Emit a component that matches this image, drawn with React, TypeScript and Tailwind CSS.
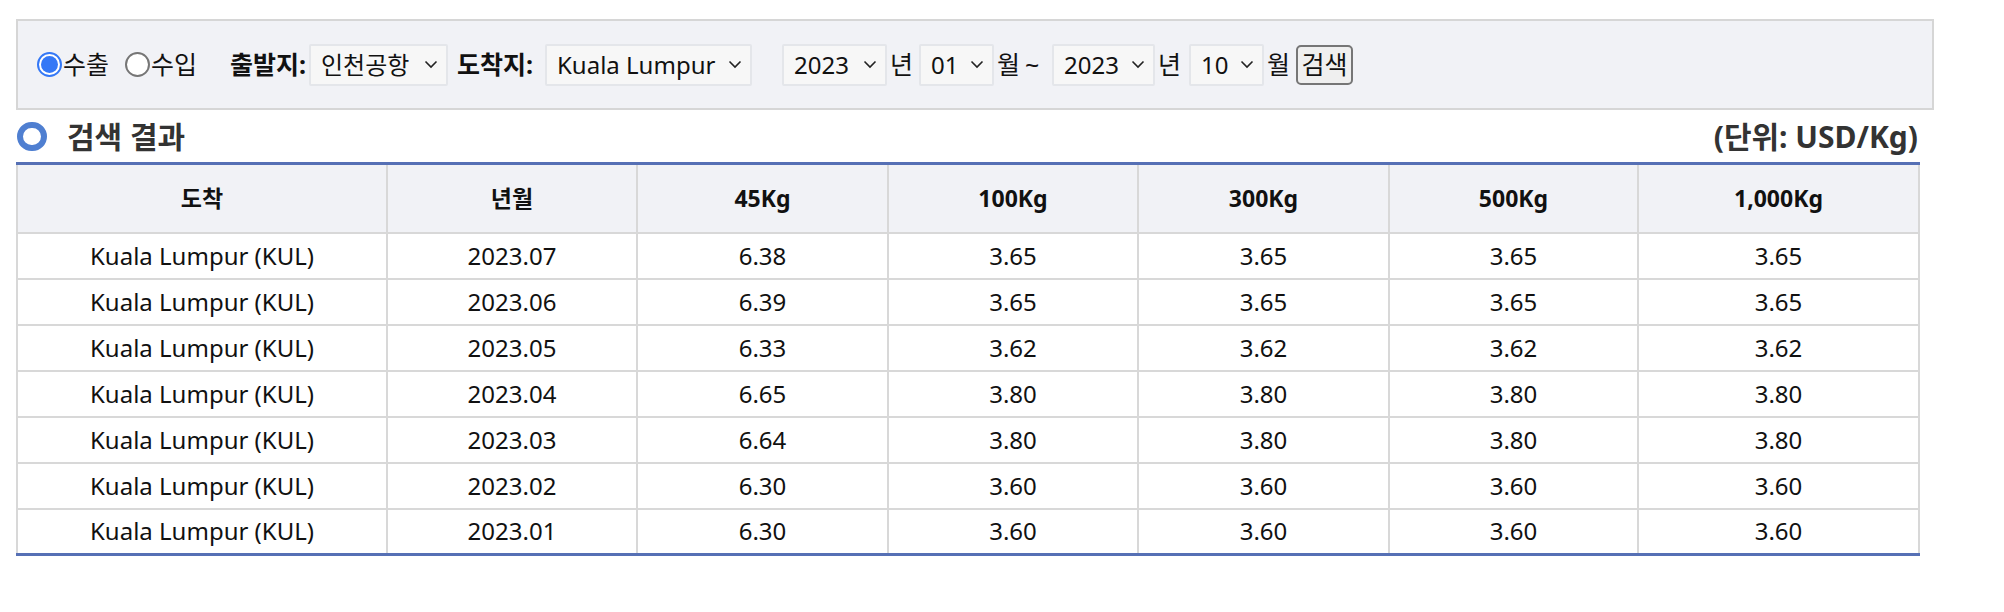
import React from "react";

const font = '"Noto Sans", "Noto Sans CJK KR", sans-serif';

function Chevron() {
  return (
    <svg width="14" height="9" viewBox="0 0 14 9" className="shrink-0">
      <path d="M1.5 1.5 L7 7 L12.5 1.5" fill="none" stroke="#222" strokeWidth="1.6" />
    </svg>
  );
}

function Sel({ label, w, cls }: { label: string; w: string; cls: string }) {
  return (
    <div
      className={`flex h-[42px] shrink-0 items-center justify-between rounded-[2px] border-2 border-[#e4e6ea] bg-[#f7f7f7] pl-[10px] pr-[8px] text-[24px] text-[#111] ${w} ${cls}`}
    >
      <span className="whitespace-nowrap">{label}</span>
      <Chevron />
    </div>
  );
}

function Radio({ checked, cls }: { checked: boolean; cls: string }) {
  return checked ? (
    <span className={`flex h-[25px] w-[25px] shrink-0 items-center justify-center rounded-full border-2 border-[#3478f6] bg-white ${cls}`}>
      <span className="block h-[17px] w-[17px] rounded-full bg-[#3478f6]" />
    </span>
  ) : (
    <span className={`block h-[25px] w-[25px] shrink-0 rounded-full border-2 border-[#767676] bg-white ${cls}`} />
  );
}

function Lbl({ t, cls }: { t: string; cls: string }) {
  return <span className={`block shrink-0 whitespace-nowrap ${cls}`}>{t}</span>;
}

const rows = [
  ["2023.07", "6.38", "3.65"],
  ["2023.06", "6.39", "3.65"],
  ["2023.05", "6.33", "3.62"],
  ["2023.04", "6.65", "3.80"],
  ["2023.03", "6.64", "3.80"],
  ["2023.02", "6.30", "3.60"],
  ["2023.01", "6.30", "3.60"],
];

const heads = ["도착", "년월", "45Kg", "100Kg", "300Kg", "500Kg", "1,000Kg"];
const widths = [370, 250, 251, 250, 251, 249, 281];

export default function App() {
  return (
    <div className="min-h-[612px] bg-white pt-[19px] pl-[16px]" style={{ fontFamily: font }}>
      <div className="flex h-[91px] w-[1918px] items-center border-2 border-[#d6d6d6] bg-[#f1f2f6] pl-[19px] text-[25px] text-[#111]">
        <Radio checked cls="" />
        <Lbl t="수출" cls="w-[49px] pl-[1px]" />
        <Radio checked={false} cls="ml-[14px]" />
        <Lbl t="수입" cls="w-[48px] pl-[1px]" />
        <Lbl t="출발지:" cls="ml-[32px] w-[75px] font-bold" />
        <Sel label="인천공항" w="w-[139px]" cls="ml-[4px]" />
        <Lbl t="도착지:" cls="ml-[9px] w-[78px] font-bold" />
        <Sel label="Kuala Lumpur" w="w-[207px]" cls="ml-[10px]" />
        <Sel label="2023" w="w-[105px]" cls="ml-[30px]" />
        <Lbl t="년" cls="ml-[3px] w-[22px]" />
        <Sel label="01" w="w-[75px]" cls="ml-[7px]" />
        <Lbl t="월" cls="ml-[3px] w-[22px]" />
        <Lbl t="~" cls="ml-[6px] w-[17px]" />
        <Sel label="2023" w="w-[103px]" cls="ml-[10px]" />
        <Lbl t="년" cls="ml-[3px] w-[22px]" />
        <Sel label="10" w="w-[75px]" cls="ml-[9px]" />
        <Lbl t="월" cls="ml-[3px] w-[21px]" />
        <span className="ml-[8px] flex h-[40px] w-[57px] shrink-0 items-center justify-center rounded-[5px] border-2 border-[#767676] bg-[#efefef] text-[25px] leading-none">
          검색
        </span>
      </div>

      <div className="flex h-[52px] w-[1902px] items-center justify-between">
        <div className="flex items-center">
          <span className="ml-[1px] block h-[29px] w-[30px] rounded-full border-[6px] border-[#4f7fd1] blur-[0.7px]" />
          <span className="ml-[20px] text-[30px] font-bold text-[#333]">검색 결과</span>
        </div>
        <span className="text-[30px] font-bold text-[#333]">(단위: USD/Kg)</span>
      </div>

      <table className="w-[1902px] table-fixed border-collapse border-t-[3px] border-b-[3px] border-t-[#5670b5] border-b-[#5670b5] text-[#111]">
        <colgroup>
          {widths.map((w, i) => (
            <col key={i} style={{ width: w }} />
          ))}
        </colgroup>
        <thead>
          <tr className="h-[69px] bg-[#f1f2f6]">
            {heads.map((h) => (
              <th key={h} className="border-2 border-t-0 border-[#d8d8d8] text-center text-[23px] font-bold">
                {h}
              </th>
            ))}
          </tr>
        </thead>
        <tbody>
          {rows.map((r) => (
            <tr key={r[0]} className="h-[46px]">
              <td className="border-2 border-[#d8d8d8] text-center text-[24px]">Kuala Lumpur (KUL)</td>
              <td className="border-2 border-[#d8d8d8] text-center text-[24px]">{r[0]}</td>
              <td className="border-2 border-[#d8d8d8] text-center text-[24px]">{r[1]}</td>
              {[0, 1, 2, 3].map((k) => (
                <td key={k} className="border-2 border-[#d8d8d8] text-center text-[24px]">
                  {r[2]}
                </td>
              ))}
            </tr>
          ))}
        </tbody>
      </table>
    </div>
  );
}
